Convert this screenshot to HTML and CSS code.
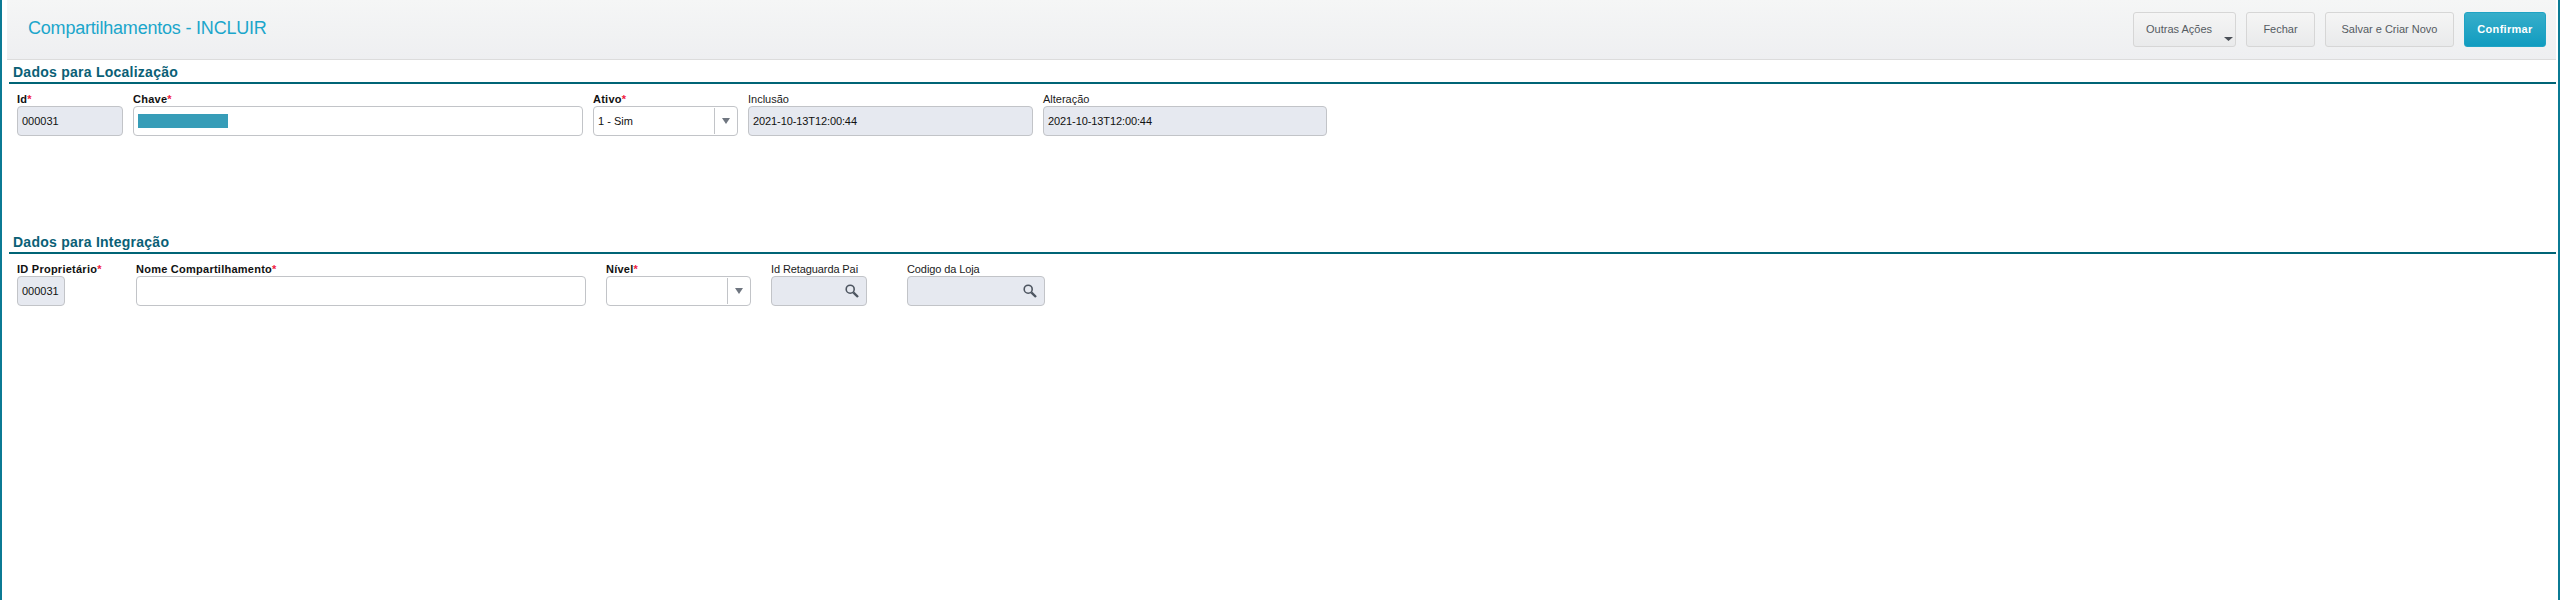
FILE: index.html
```html
<!DOCTYPE html>
<html lang="pt-BR">
<head>
<meta charset="utf-8">
<title>Compartilhamentos - INCLUIR</title>
<link rel="stylesheet" href="styles.css">
</head>
<body>
<div class="shell">
  <header class="header">
    <h1 class="title">Compartilhamentos - INCLUIR</h1>
    <div class="actions">
      <button class="btn btn-menu" type="button">Outras Ações
        <svg class="btn-caret" width="9" height="4" viewBox="0 0 9 4"><path d="M0 0H9L4.5 4Z" fill="#4a4f57"/></svg>
      </button>
      <button class="btn btn-close" type="button">Fechar</button>
      <button class="btn btn-save" type="button">Salvar e Criar Novo</button>
      <button class="btn btn-primary" type="button">Confirmar</button>
    </div>
  </header>
  <main class="content">
    <section class="section section-loc">
      <h2 class="section-title">Dados para Localização</h2>
      <div class="row row-loc">
        <div class="field w-id">
          <label class="label req">Id<span class="star">*</span></label>
          <div class="box box-off">000031</div>
        </div>
        <div class="field w-key">
          <label class="label req">Chave<span class="star">*</span></label>
          <div class="box"><span class="mask"></span></div>
        </div>
        <div class="field w-active">
          <label class="label req">Ativo<span class="star">*</span></label>
          <div class="box box-select"><span class="value">1 - Sim</span><span class="select-btn"><svg width="8" height="6" viewBox="0 0 8 6"><path d="M0 0H8L4 6Z" fill="#6f7680"/></svg></span></div>
        </div>
        <div class="field w-date">
          <label class="label">Inclusão</label>
          <div class="box box-off box-date">2021-10-13T12:00:44</div>
        </div>
        <div class="field w-date2">
          <label class="label">Alteração</label>
          <div class="box box-off box-date">2021-10-13T12:00:44</div>
        </div>
      </div>
    </section>
    <section class="section">
      <h2 class="section-title">Dados para Integração</h2>
      <div class="row">
        <div class="field w-owner">
          <label class="label req">ID Proprietário<span class="star">*</span></label>
          <div class="box box-off box-narrow">000031</div>
        </div>
        <div class="field w-name">
          <label class="label req">Nome Compartilhamento<span class="star">*</span></label>
          <div class="box"></div>
        </div>
        <div class="field w-level">
          <label class="label req">Nível<span class="star">*</span></label>
          <div class="box box-select"><span class="value"></span><span class="select-btn"><svg width="8" height="6" viewBox="0 0 8 6"><path d="M0 0H8L4 6Z" fill="#6f7680"/></svg></span></div>
        </div>
        <div class="field w-parent">
          <label class="label label-tight">Id Retaguarda Pai</label>
          <div class="box box-off box-search"><svg width="14" height="14" viewBox="0 0 14 14"><circle cx="5.2" cy="5.2" r="4" fill="none" stroke="#4d5560" stroke-width="1.6"/><path d="M8.3 8.3L13 13" stroke="#4d5560" stroke-width="2.4"/></svg></div>
        </div>
        <div class="field w-store">
          <label class="label label-tight">Codigo da Loja</label>
          <div class="box box-off box-search"><svg width="14" height="14" viewBox="0 0 14 14"><circle cx="5.2" cy="5.2" r="4" fill="none" stroke="#4d5560" stroke-width="1.6"/><path d="M8.3 8.3L13 13" stroke="#4d5560" stroke-width="2.4"/></svg></div>
        </div>
      </div>
    </section>
  </main>
</div>
</body>
</html>
```
FILE: styles.css
```css
* { box-sizing: border-box; }
html, body { margin: 0; height: 100%; background: #fff; }
body { font-family: "Liberation Sans", Arial, sans-serif; font-size: 11px; color: #1b1b1b; overflow: hidden; }

.shell {
  height: 600px;
  border-left: 2px solid #0b7a94;
  border-right: 2px solid #0b7a94;
  padding: 0 2px 0 5px;
}

.header {
  height: 60px;
  display: flex;
  align-items: center;
  justify-content: space-between;
  padding: 0 10px 1px 21px;
  background: linear-gradient(#f5f6f6, #eeeff1);
  border-bottom: 1px solid #dcdcdc;
}
.title { margin: 0 0 2px; font-size: 18px; font-weight: 400; letter-spacing: -0.2px; color: #1ba6cb; }
.actions { display: flex; gap: 10px; }

.btn {
  position: relative;
  height: 35px;
  padding: 0;
  font: 11px "Liberation Sans", Arial, sans-serif;
  color: #555b62;
  background: linear-gradient(#f5f5f5, #e9eaeb);
  border: 1px solid #d6d6d6;
  border-radius: 3px;
}
.btn-menu { width: 103px; text-align: left; padding-left: 12px; }
.btn-close { width: 69px; }
.btn-save { width: 129px; }
.btn-primary {
  width: 82px;
  font-weight: 700;
  letter-spacing: 0.3px;
  color: #fff;
  background: linear-gradient(#37aeca, #119cc0);
  border-color: #1fa3c4;
}
.btn-caret { position: absolute; right: 2px; top: 24px; }

.content { padding-left: 2px; }
.section-loc { height: 170px; }
.section-title {
  margin: 0;
  height: 24px;
  padding: 4px 0 0 4px;
  font-size: 14px;
  line-height: 16px;
  font-weight: 700;
  letter-spacing: 0.25px;
  color: #0a6076;
  border-bottom: 2px solid #006476;
}

.row { display: flex; padding: 8px 0 0 8px; }
.row-loc { gap: 10px; }

.field { display: flex; flex-direction: column; flex: none; }
.w-id { width: 106px; }
.w-key { width: 450px; }
.w-active { width: 145px; }
.w-date { width: 285px; }
.w-date2 { width: 284px; }
.w-owner { width: 119px; }
.w-name { width: 450px; margin-right: 20px; }
.w-level { width: 145px; margin-right: 20px; }
.w-parent { width: 96px; margin-right: 40px; }
.w-store { width: 138px; }

.label { height: 14px; line-height: 15px; white-space: nowrap; }
.label-tight { letter-spacing: -0.1px; }
.req { font-weight: 700; letter-spacing: 0.25px; color: #111; }
.star { color: #f0203f; }

.box {
  height: 30px;
  display: flex;
  align-items: center;
  padding: 0 4px;
  background: #fff;
  border: 1px solid #c2c4c8;
  border-radius: 4px;
  color: #111;
}
.box-off { background: #e6e9f0; }
.box-date { letter-spacing: -0.1px; }
.box-narrow { width: 48px; }
.mask { width: 90px; height: 14px; background: #379db8; }
.box-select { padding-right: 0; justify-content: space-between; }
.select-btn {
  width: 23px;
  height: 26px;
  display: flex;
  align-items: center;
  justify-content: center;
  border-left: 1px solid #c2c4c8;
}
.box-search { justify-content: flex-end; padding-right: 7px; }
```
